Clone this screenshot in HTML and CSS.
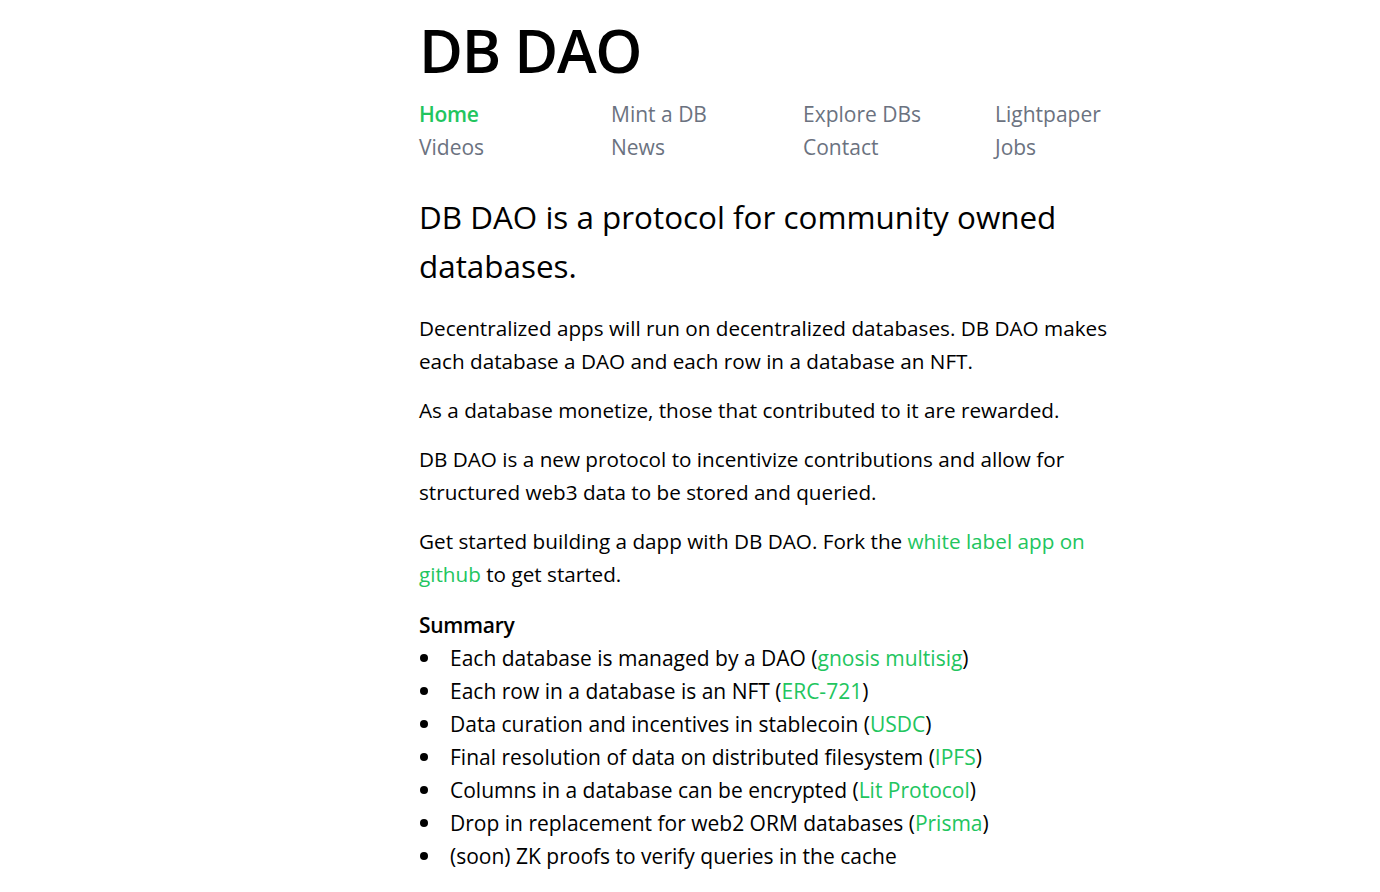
FILE: index.html
```html
<!DOCTYPE html>
<html lang="en">
<head>
<meta charset="utf-8">
<title>DB DAO</title>
<link rel="stylesheet" href="styles.css">
</head>
<body>
<main class="page">
  <h1 class="title">DB DAO</h1>
  <nav class="nav">
    <a class="nav-link active" href="#">Home</a>
    <a class="nav-link" href="#">Mint a DB</a>
    <a class="nav-link" href="#">Explore DBs</a>
    <a class="nav-link" href="#">Lightpaper</a>
    <a class="nav-link" href="#">Videos</a>
    <a class="nav-link" href="#">News</a>
    <a class="nav-link" href="#">Contact</a>
    <a class="nav-link" href="#">Jobs</a>
  </nav>
  <h2 class="lead">DB DAO is a protocol for community owned databases.</h2>
  <p class="para">Decentralized apps will run on decentralized databases. DB DAO makes each database a DAO and each row in a database an NFT.</p>
  <p class="para">As a database monetize, those that contributed to it are rewarded.</p>
  <p class="para">DB DAO is a new protocol to incentivize contributions and allow for structured web3 data to be stored and queried.</p>
  <p class="para">Get started building a dapp with DB DAO. Fork the <a class="link" href="#">white label app on github</a> to get started.</p>
  <h3 class="summary">Summary</h3>
  <ul class="list">
    <li class="item">Each database is managed by a DAO (<a class="link" href="#">gnosis multisig</a>)</li>
    <li class="item">Each row in a database is an NFT (<a class="link" href="#">ERC-721</a>)</li>
    <li class="item">Data curation and incentives in stablecoin (<a class="link" href="#">USDC</a>)</li>
    <li class="item">Final resolution of data on distributed filesystem (<a class="link" href="#">IPFS</a>)</li>
    <li class="item">Columns in a database can be encrypted (<a class="link" href="#">Lit Protocol</a>)</li>
    <li class="item">Drop in replacement for web2 ORM databases (<a class="link" href="#">Prisma</a>)</li>
    <li class="item">(soon) ZK proofs to verify queries in the cache</li>
  </ul>
</main>
</body>
</html>
```

FILE: styles.css
```css
html, body {
  margin: 0;
  padding: 0;
  background: #ffffff;
}
body {
  font-family: "Open Sans", "Noto Sans", sans-serif;
  color: #000000;
}
.page {
  width: 700px;
  margin-left: 419px;
  padding-top: 14px;
}
.title {
  font-size: 60px;
  font-weight: 600;
  line-height: 72px;
  margin: 0;
  letter-spacing: -1.3px;
}
.nav {
  display: grid;
  grid-template-columns: repeat(4, 192px);
  margin-top: 12px;
}
.nav-link {
  font-size: 21px;
  line-height: 33px;
  color: #6b7280;
  text-decoration: none;
}
.nav-link.active {
  color: #22c55e;
  font-weight: 600;
  letter-spacing: -0.3px;
}
.lead {
  font-size: 31.4px;
  font-weight: 400;
  line-height: 49px;
  margin: 28px 0 22px;
  width: 680px;
}
.para {
  font-size: 20.7px;
  line-height: 33px;
  margin: 0 0 16px;
}
.link {
  color: #22c55e;
  text-decoration: none;
}
.summary {
  font-size: 21px;
  font-weight: 600;
  line-height: 33px;
  margin: 17.5px 0 0;
  letter-spacing: -0.3px;
}
.list {
  margin: 0;
  padding: 0;
  list-style: none;
}
.item {
  display: flex;
  align-items: center;
  font-size: 21px;
  line-height: 33px;
}
.item::before {
  content: "";
  flex: none;
  width: 8px;
  height: 8px;
  border-radius: 50%;
  background: #000000;
  margin: 0 22px 0 1px;
}
```
